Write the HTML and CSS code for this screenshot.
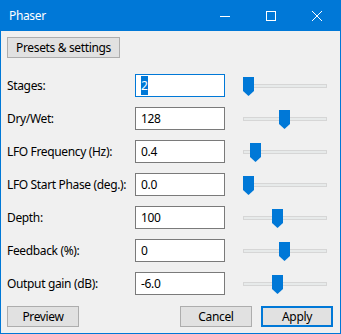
FILE: index.html
```html
<!DOCTYPE html>
<html lang="en">
<head>
  <meta charset="UTF-8">
  <title>Phaser</title>
  <link rel="stylesheet" href="styles.css">
</head>
<body>

  <div class="window">
    <div class="titlebar">
      <span class="title">Phaser</span>
      <div class="caption">
        <span class="cap-btn">
          <svg width="10" height="10" viewBox="0 0 10 10"><path d="M0 5.5H10" stroke="#fff" stroke-width="1"/></svg>
        </span>
        <span class="cap-btn">
          <svg width="10" height="10" viewBox="0 0 10 10"><rect x="0.5" y="0.5" width="9" height="9" fill="none" stroke="#fff" stroke-width="1"/></svg>
        </span>
        <span class="cap-btn">
          <svg width="10" height="10" viewBox="0 0 10 10"><path d="M0 0L10 10M10 0L0 10" stroke="#fff" stroke-width="1"/></svg>
        </span>
      </div>
    </div>

    <div class="content">
      <button class="btn presets">Presets &amp; settings</button>

      <div class="params">
        <label>Stages:</label>
        <div class="field focused"><span class="sel">2</span></div>
        <div class="slider"><div class="track"></div><span class="thumb" style="left: 0px"></span></div>

        <label>Dry/Wet:</label>
        <div class="field">128</div>
        <div class="slider"><div class="track"></div><span class="thumb" style="left: 36px"></span></div>

        <label>LFO Frequency (Hz):</label>
        <div class="field">0.4</div>
        <div class="slider"><div class="track"></div><span class="thumb" style="left: 7px"></span></div>

        <label>LFO Start Phase (deg.):</label>
        <div class="field">0.0</div>
        <div class="slider"><div class="track"></div><span class="thumb" style="left: 0px"></span></div>

        <label>Depth:</label>
        <div class="field">100</div>
        <div class="slider"><div class="track"></div><span class="thumb" style="left: 29px"></span></div>

        <label>Feedback (%):</label>
        <div class="field">0</div>
        <div class="slider"><div class="track"></div><span class="thumb" style="left: 36px"></span></div>

        <label>Output gain (dB):</label>
        <div class="field">-6.0</div>
        <div class="slider"><div class="track"></div><span class="thumb" style="left: 29px"></span></div>
      </div>

      <div class="footer">
        <button class="btn">Preview</button>
        <div class="right">
          <button class="btn">Cancel</button>
          <button class="btn default">Apply</button>
        </div>
      </div>
    </div>
  </div>

</body>
</html>
```

FILE: styles.css
```css
body {
  margin: 0;
  font-family: "Noto Sans", "Open Sans", sans-serif;
  font-size: 12px;
  letter-spacing: -0.35px;
  color: #000;
}

.window {
  width: 341px;
  height: 334px;
  box-sizing: border-box;
  border: 1px solid #0078d7;
  border-top: none;
  background-color: #f0f0f0;
  display: flex;
  flex-direction: column;
}

.titlebar {
  height: 31px;
  margin: 0 -1px;
  background-color: #0078d7;
  color: #fff;
  display: flex;
  align-items: center;
  justify-content: space-between;
}

.title {
  padding-left: 9px;
  font-size: 12px;
}

.caption {
  display: flex;
  height: 100%;
  padding-right: 1px;
}

.cap-btn {
  width: 46px;
  display: flex;
  align-items: center;
  justify-content: center;
}

.content {
  flex: 1;
  padding: 6px 6px 0 6px;
  display: flex;
  flex-direction: column;
}

.btn {
  font-family: inherit;
  font-size: 12px;
  letter-spacing: inherit;
  color: #000;
  height: 21px;
  width: 72px;
  padding: 0;
  border: 1px solid #adadad;
  background-color: #e1e1e1;
  box-sizing: border-box;
}

.presets {
  width: 113px;
}

.params {
  display: grid;
  grid-template-columns: 128px 90px 102px;
  row-gap: 10px;
  margin-top: 16px;
  align-items: center;
}

.params label {
  line-height: 23px;
  white-space: nowrap;
}

.field {
  height: 23px;
  box-sizing: border-box;
  border: 1px solid #7a7a7a;
  background-color: #fff;
  padding-left: 5px;
  line-height: 21px;
}

.field.focused {
  border-color: #0078d7;
}

.sel {
  background-color: #0078d7;
  color: #fff;
  padding: 1px 0;
}

.slider {
  position: relative;
  height: 23px;
  margin-left: 18px;
}

.track {
  position: absolute;
  left: 0;
  right: 0;
  top: 10px;
  height: 4px;
  box-sizing: border-box;
  border: 1px solid #d6d6d6;
  background-color: #e7eaea;
}

.thumb {
  position: absolute;
  top: 3px;
  width: 11px;
  height: 19px;
  background-color: #0078d7;
  clip-path: polygon(0 0, 100% 0, 100% 14px, 50% 19px, 0 14px);
}

.footer {
  display: flex;
  justify-content: space-between;
  margin-top: 11px;
  padding-right: 1px;
}

.right {
  display: flex;
  gap: 9px;
}

.default {
  border: 2px solid #0078d7;
}
```
